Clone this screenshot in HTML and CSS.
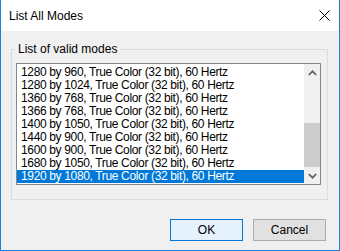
FILE: index.html
```html
<!DOCTYPE html>
<html>
<head>
<meta charset="utf-8">
<title>List All Modes</title>
<link rel="stylesheet" href="styles.css">
</head>
<body>
<div class="window">
  <div class="titlebar">
    <span class="title">List All Modes</span>
    <svg class="close" width="11" height="11" viewBox="0 0 11 11"><path d="M0.5 0.5 L10.5 10.5 M10.5 0.5 L0.5 10.5" stroke="#000" stroke-width="1" fill="none"/></svg>
  </div>
  <div class="body">
    <fieldset class="group">
      <legend>List of valid modes</legend>
      <div class="listbox">
        <div class="items">
          <div class="item">1280 by 960, True Color (32 bit), 60 Hertz</div>
          <div class="item">1280 by 1024, True Color (32 bit), 60 Hertz</div>
          <div class="item">1360 by 768, True Color (32 bit), 60 Hertz</div>
          <div class="item">1366 by 768, True Color (32 bit), 60 Hertz</div>
          <div class="item">1400 by 1050, True Color (32 bit), 60 Hertz</div>
          <div class="item">1440 by 900, True Color (32 bit), 60 Hertz</div>
          <div class="item">1600 by 900, True Color (32 bit), 60 Hertz</div>
          <div class="item">1680 by 1050, True Color (32 bit), 60 Hertz</div>
          <div class="item selected">1920 by 1080, True Color (32 bit), 60 Hertz</div>
        </div>
        <div class="scrollbar">
          <div class="arrow"><svg width="9" height="6" viewBox="0 0 9 6"><polyline points="0.8,5 4.5,1.3 8.2,5" fill="none" stroke="#606060" stroke-width="1.7"/></svg></div>
          <div class="track"><div class="thumb"></div></div>
          <div class="arrow"><svg width="9" height="6" viewBox="0 0 9 6"><polyline points="0.8,1 4.5,4.7 8.2,1" fill="none" stroke="#606060" stroke-width="1.7"/></svg></div>
        </div>
      </div>
    </fieldset>
    <div class="buttons">
      <div class="btn default">OK</div>
      <div class="btn">Cancel</div>
    </div>
  </div>
</div>
</body>
</html>
```
FILE: styles.css
```css
html, body {
  margin: 0;
  padding: 0;
}
body {
  width: 340px;
  height: 251px;
  font-family: "Liberation Sans", Arial, sans-serif;
  font-size: 12px;
  color: #000;
  overflow: hidden;
}
.window {
  box-sizing: border-box;
  width: 340px;
  height: 251px;
  border: 1px solid #1883d7;
  border-top: none;
  background: #f0f0f0;
  display: flex;
  flex-direction: column;
}
.titlebar {
  height: 31px;
  background: #fff;
  display: flex;
  align-items: center;
  justify-content: space-between;
  padding-left: 8px;
  padding-right: 9px;
}
.title {
  font-size: 12px;
  line-height: 15px;
  margin-top: 1px;
}
.close {
  display: block;
}
.body {
  flex: 1;
  display: flex;
  flex-direction: column;
}
.group {
  margin: 11px 11px 0 10px;
  padding: 0;
  border: 1px solid #dcdcdc;
  min-width: 0;
}
.group legend {
  margin-left: 3px;
  padding: 0 3px;
  line-height: 15px;
}
.listbox {
  box-sizing: border-box;
  margin: 6px 6px 14px 4px;
  height: 122px;
  border: 1px solid #828790;
  background: #fff;
  display: flex;
}
.items {
  flex: 1;
  padding-top: 2px;
  overflow: hidden;
}
.item {
  height: 13px;
  line-height: 13px;
  padding-left: 4px;
  white-space: nowrap;
  letter-spacing: -0.35px;
}
.item.selected {
  background: #0078d7;
  color: #fff;
}
.scrollbar {
  width: 16px;
  background: #f0f0f0;
  display: flex;
  flex-direction: column;
}
.arrow {
  height: 17px;
  display: flex;
  align-items: center;
  justify-content: center;
}
.track {
  flex: 1;
  display: flex;
  flex-direction: column;
  justify-content: flex-end;
}
.thumb {
  height: 44px;
  background: #cdcdcd;
}
.buttons {
  display: flex;
  justify-content: flex-end;
  gap: 10px;
  margin-top: 19px;
  padding-right: 13px;
}
.btn {
  box-sizing: border-box;
  width: 73px;
  height: 22px;
  border: 1px solid #adadad;
  background: #e1e1e1;
  display: flex;
  align-items: center;
  justify-content: center;
  line-height: 14px;
}
.btn.default {
  border-color: #0078d7;
  background: #e5f1fb;
}
```
